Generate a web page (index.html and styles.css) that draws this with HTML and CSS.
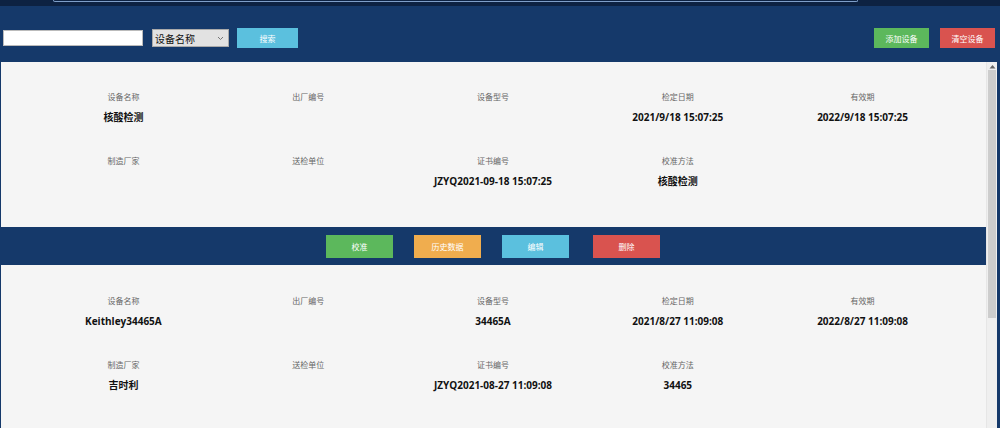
FILE: index.html
```html
<!DOCTYPE html>
<html lang="zh">
<head>
    <meta charset="UTF-8" />
    <title>设备管理</title>
    <link rel="stylesheet" href="styles.css">
</head>
<body>
<div class="topbar">
    <div class="topbox"></div>
</div>

<div class="toolbar">
    <input type="text" class="kw" />
    <div class="select">
        <span>设备名称</span>
        <svg width="7" height="5" viewBox="0 0 7 5"><path d="M1 1 L3.5 3.5 L6 1" fill="none" stroke="#777" stroke-width="1"/></svg>
    </div>
    <button class="btn info search">搜索</button>
    <div class="spacer"></div>
    <button class="btn success add">添加设备</button>
    <button class="btn danger clear">清空设备</button>
</div>

<div class="panel">
    <div class="list">
        <div class="card">
            <div class="field"><div class="label">设备名称</div><div class="value">核酸检测</div></div>
            <div class="field"><div class="label">出厂编号</div><div class="value"></div></div>
            <div class="field"><div class="label">设备型号</div><div class="value"></div></div>
            <div class="field"><div class="label">检定日期</div><div class="value">2021/9/18 15:07:25</div></div>
            <div class="field"><div class="label">有效期</div><div class="value">2022/9/18 15:07:25</div></div>
            <div class="field"><div class="label">制造厂家</div><div class="value"></div></div>
            <div class="field"><div class="label">送检单位</div><div class="value"></div></div>
            <div class="field"><div class="label">证书编号</div><div class="value">JZYQ2021-09-18 15:07:25</div></div>
            <div class="field"><div class="label">校准方法</div><div class="value">核酸检测</div></div>
        </div>
        <div class="actions">
            <button class="btn success">校准</button>
            <button class="btn warning">历史数据</button>
            <button class="btn info">编辑</button>
            <button class="btn danger">删除</button>
        </div>
        <div class="card">
            <div class="field"><div class="label">设备名称</div><div class="value">Keithley34465A</div></div>
            <div class="field"><div class="label">出厂编号</div><div class="value"></div></div>
            <div class="field"><div class="label">设备型号</div><div class="value">34465A</div></div>
            <div class="field"><div class="label">检定日期</div><div class="value">2021/8/27 11:09:08</div></div>
            <div class="field"><div class="label">有效期</div><div class="value">2022/8/27 11:09:08</div></div>
            <div class="field"><div class="label">制造厂家</div><div class="value">吉时利</div></div>
            <div class="field"><div class="label">送检单位</div><div class="value"></div></div>
            <div class="field"><div class="label">证书编号</div><div class="value">JZYQ2021-08-27 11:09:08</div></div>
            <div class="field"><div class="label">校准方法</div><div class="value">34465</div></div>
        </div>
    </div>
    <div class="scrollbar">
        <div class="arrow">
            <svg width="7" height="5" viewBox="0 0 7 5"><path d="M0.5 4.5 L3.5 1 L6.5 4.5 Z" fill="#666"/></svg>
        </div>
        <div class="thumb"></div>
    </div>
</div>
</body>
</html>
```

FILE: styles.css
```css
body {
  margin: 0;
  height: 428px;
  overflow: hidden;
  background: #15396a;
  font-family: "Open Sans", "Noto Sans CJK SC", sans-serif;
  color: #111;
}

.topbar {
  height: 6px;
  background: #0d2242;
}

.topbox {
  margin-left: 53px;
  width: 803px;
  height: 1px;
  border: 1px solid #7f9fc9;
  border-top: none;
  border-radius: 0 0 4px 4px;
}

.toolbar {
  display: flex;
  align-items: center;
  padding: 22px 5px 0 3px;
  height: 20px;
}

.kw {
  box-sizing: border-box;
  width: 140px;
  height: 16px;
  margin: 0;
  border: 1px solid #bbb;
  background: #fff;
}

.select {
  box-sizing: border-box;
  display: flex;
  align-items: center;
  justify-content: space-between;
  width: 77px;
  height: 18px;
  margin-left: 9px;
  padding: 0 4px 0 2px;
  background: #e2e2e2;
  border: 1px solid #aaa;
  font-family: "Noto Sans CJK SC", sans-serif;
  font-size: 10px;
  color: #111;
}

.btn {
  border: none;
  color: #fff;
  font-family: "Noto Sans CJK SC", sans-serif;
  font-size: 8px;
  padding: 0;
  cursor: pointer;
}

.success { background: #5cb85c; }
.warning { background: #f0ad4e; }
.info { background: #5bc0de; }
.danger { background: #d9534f; }

.search {
  width: 61px;
  height: 20px;
  margin-left: 8px;
}

.spacer {
  flex: 1;
}

.add, .clear {
  width: 55px;
  height: 20px;
}

.clear {
  margin-left: 11px;
}

.panel {
  display: flex;
  margin: 14px 3px 0 1px;
  height: 366px;
  background: #f5f5f5;
  overflow: hidden;
}

.list {
  flex: 1;
}

.card {
  display: grid;
  grid-template-columns: repeat(5, 1fr);
  row-gap: 32px;
  padding: 30px 31px 39px 30px;
  text-align: center;
}

.card + .actions + .card {
  padding-top: 31px;
}

.label {
  height: 10px;
  line-height: 10px;
  font-family: "Noto Sans CJK SC", sans-serif;
  font-size: 8px;
  color: #666;
}

.value {
  height: 14px;
  line-height: 14px;
  margin-top: 8px;
  font-size: 10px;
  font-weight: bold;
  color: #111;
}

.actions {
  display: flex;
  justify-content: center;
  gap: 21px;
  height: 38px;
  align-items: center;
  background: #15396a;
  padding-right: 1px;
}

.actions .btn {
  width: 67px;
  height: 23px;
}

.actions .danger {
  margin-left: 3px;
}

.scrollbar {
  width: 10px;
  background: #efefef;
  border-left: 1px solid #e6e6e6;
}

.arrow {
  height: 8px;
  display: flex;
  align-items: center;
  justify-content: center;
}

.thumb {
  margin: 0 1px;
  height: 248px;
  background: #cdcdcd;
}
```
